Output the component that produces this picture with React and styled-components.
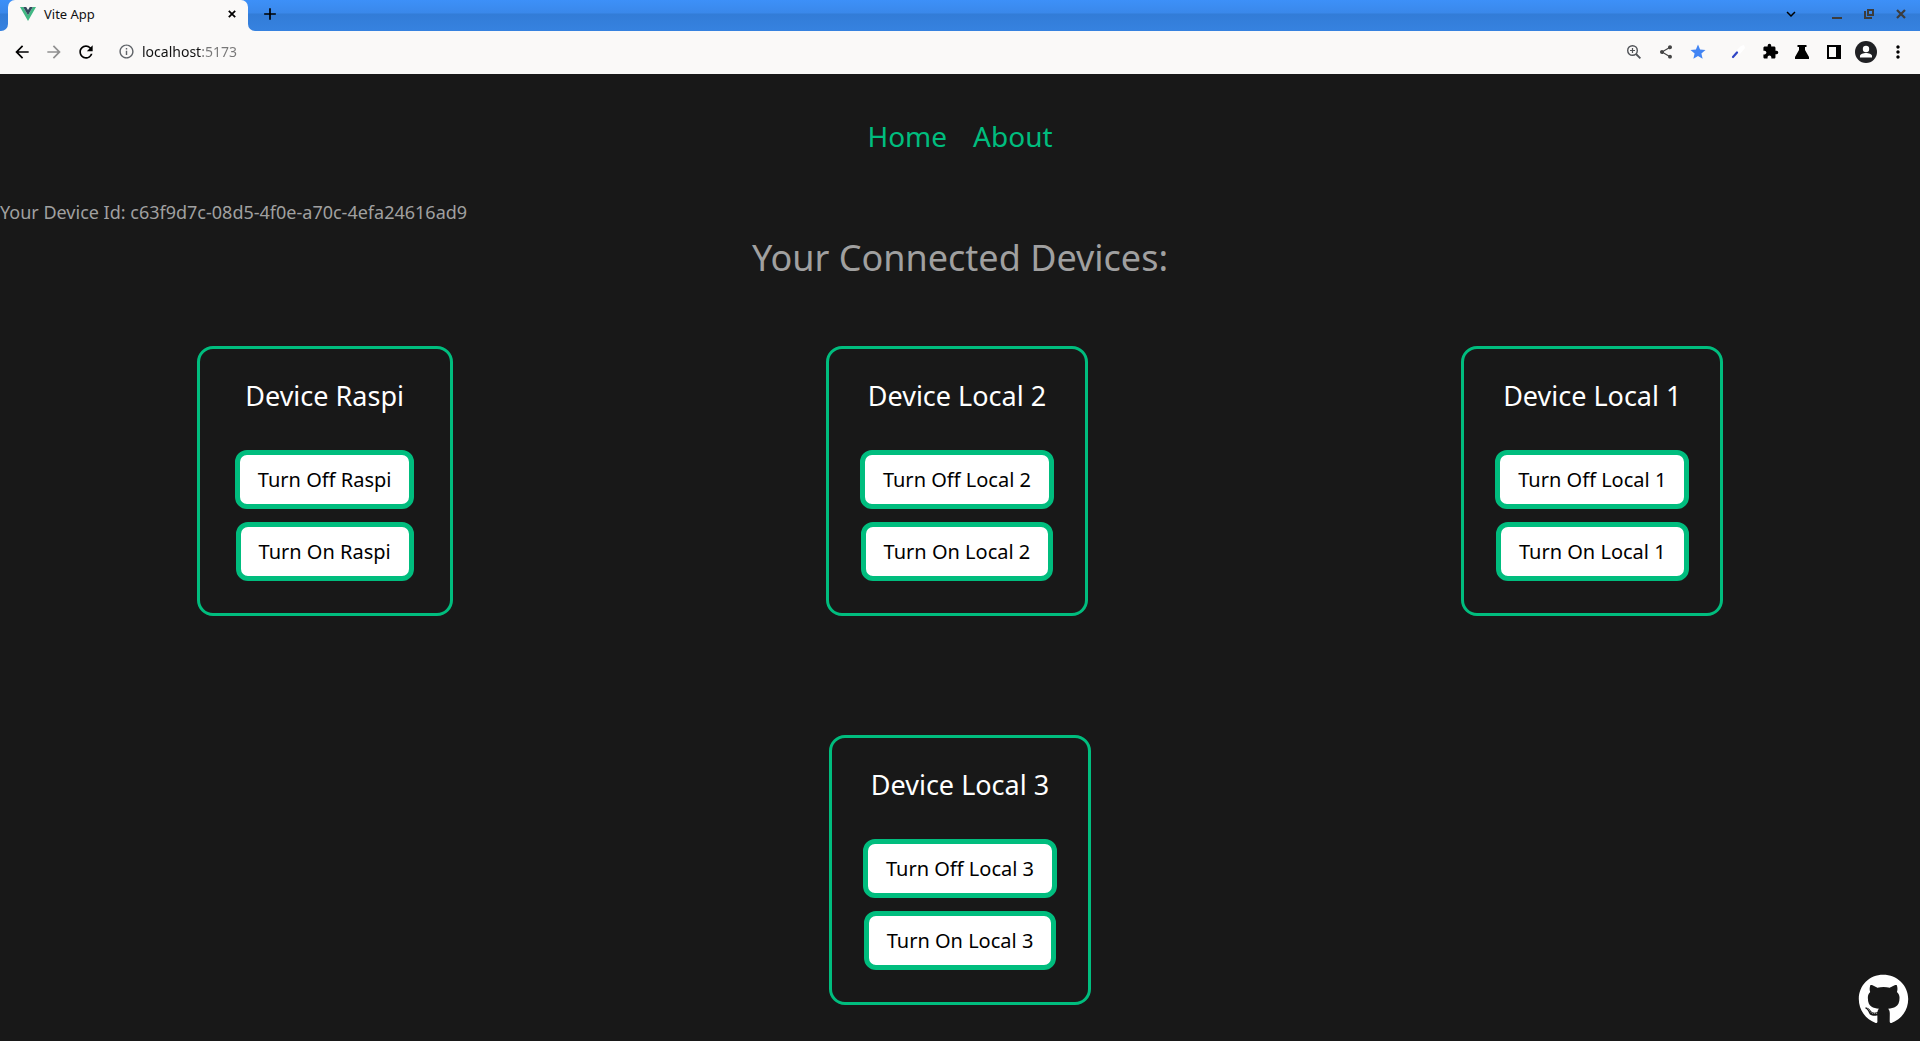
import React from "react";
import styled, { createGlobalStyle } from "styled-components";
import { MdArrowBack, MdArrowForward, MdRefresh, MdInfoOutline, MdShare, MdStar, MdExtension, MdMoreVert, MdAdd, MdKeyboardArrowDown } from "react-icons/md";
import { FaGithub } from "react-icons/fa";

const Global = createGlobalStyle`
  *, *::before, *::after { box-sizing: border-box; }
  body { margin: 0; background: #181818; font-family: "Noto Sans", sans-serif; }
  button { font-family: inherit; }
`;

const Screen = styled.div`
  min-height: 100vh;
  display: flex;
  flex-direction: column;
`;

const chrome = "linear-gradient(180deg, #3d90f8 0, #3a88ea 13px, #327cd7 14px, #3682e0 31px)";

const TabStrip = styled.div`
  display: flex;
  height: 31px;
  background: #faf9f8;
`;
const StripEdge = styled.div`
  width: 8px;
  background: ${chrome};
  border-bottom-right-radius: 7px;
`;
const TabSlot = styled.div`
  width: 240px;
  background: ${chrome};
`;
const Tab = styled.div`
  height: 31px;
  display: flex;
  align-items: center;
  gap: 8px;
  padding: 0 8px 3px 12px;
  border-radius: 7px 7px 0 0;
  background: #faf9f8;
  font-size: 13px;
  color: #111;
`;
const TabTitle = styled.span`
  flex: 1;
`;
const StripRest = styled.div`
  flex: 1;
  display: flex;
  align-items: center;
  padding: 0 5px 3px 12px;
  background: ${chrome};
  border-bottom-left-radius: 7px;
`;
const IconButton = styled.button`
  width: ${(p) => p.$w || 32}px;
  height: ${(p) => p.$h || 32}px;
  flex: none;
  display: flex;
  align-items: center;
  justify-content: center;
  padding: 0;
  border: 0;
  background: none;
  color: ${(p) => p.$color || "#000"};
`;
const Fill = styled.div`
  flex: 1;
`;

const Toolbar = styled.div`
  display: flex;
  align-items: center;
  height: 43px;
  padding: 0 6px 2px;
  background: #faf9f8;
`;
const Address = styled.input`
  flex: 1;
  min-width: 0;
  padding: 0;
  border: 0;
  outline: 0;
  font-family: "Noto Sans", sans-serif;
  font-size: 14px;
  line-height: 20px;
  color: transparent;
  background: linear-gradient(90deg, #111 60px, #777 60px);
  background-clip: text;
`;
const Spacer = styled.div`
  width: 8px;
`;

const Page = styled.main`
  flex: 1;
  display: flex;
  flex-direction: column;
  color: #a0a0a0;
`;
const Nav = styled.nav`
  display: flex;
  justify-content: center;
  gap: 26px;
  padding: 39px 0 37px;
`;
const NavLink = styled.a`
  font-size: 28px;
  line-height: 46px;
  color: #00bd7e;
  text-decoration: none;
`;
const DeviceId = styled.p`
  margin: 0;
  font-size: 18px;
  line-height: 32px;
`;
const Heading = styled.h1`
  margin: 0;
  text-align: center;
  font-size: 36px;
  font-weight: 400;
  line-height: 60px;
`;
const Devices = styled.section`
  display: flex;
  flex-direction: column;
  gap: 119px;
  padding: 58px 10px 35px;
`;
const Row = styled.div`
  display: flex;
  justify-content: space-around;
`;
const Card = styled.article`
  min-width: 256px;
  display: flex;
  flex-direction: column;
  align-items: center;
  gap: 13px;
  padding: 29px 31px 32px;
  border: 3px solid #00bd7e;
  border-radius: 16px;
`;
const CardTitle = styled.h2`
  margin: 0 0 23px;
  font-size: 27px;
  font-weight: 400;
  line-height: 36px;
  color: #fff;
`;
const Action = styled.button`
  height: 59px;
  padding: 0 18px;
  border: 5px solid #00bd7e;
  border-radius: 12px;
  background: #fff;
  color: #000;
  font-size: 20px;
  line-height: 27px;
`;
const Repo = styled.a`
  position: fixed;
  right: 11px;
  bottom: 16px;
  display: flex;
  color: #fff;
`;

function Device({ name }) {
  return (
    <Card>
      <CardTitle>Device {name}</CardTitle>
      <Action>Turn Off {name}</Action>
      <Action>Turn On {name}</Action>
    </Card>
  );
}

const VueLogo = () => (
  <svg width="16" height="14" viewBox="0 0 16 14" aria-hidden="true">
    <path d="M0 0h3.2L8 8.3 12.8 0H16L8 14z" fill="#41b883" />
    <path d="M3.2 0h3L8 3.1 9.8 0h3L8 8.3z" fill="#34495e" />
  </svg>
);
const Brush = () => (
  <svg width="16" height="16" viewBox="0 0 16 16" aria-hidden="true">
    <path d="M7 6l4-4 3-1 1 3-5 6z" fill="#fff" />
    <path d="M3 13l4-4.5" stroke="#2f45c5" strokeWidth="2.2" strokeLinecap="round" />
  </svg>
);
const ZoomGlass = () => (
  <svg width="14" height="14" viewBox="0 0 14 14" fill="none" stroke="#505357" aria-hidden="true">
    <circle cx="5.5" cy="5.5" r="4.8" strokeWidth="1.4" />
    <path d="M9 9l4.4 4.4" strokeWidth="1.8" />
    <path d="M5.5 3v5M3 5.5h5" strokeWidth="1.2" />
  </svg>
);
const Flask = () => (
  <svg width="14" height="14" viewBox="0 0 14 14" aria-hidden="true">
    <path d="M2.5 0h9v2H10v3l4 7v2H0v-2l4-7V2H2.5z" />
  </svg>
);
const SidePanel = () => (
  <svg width="14" height="14" viewBox="0 0 14 14" aria-hidden="true">
    <path fillRule="evenodd" d="M0 0h14v14H0zM2 2v10h7V2z" />
  </svg>
);
const Avatar = () => (
  <svg width="22" height="22" viewBox="0 0 22 22" aria-hidden="true">
    <circle cx="11" cy="11" r="11" fill="#202124" />
    <circle cx="11" cy="8" r="3.2" fill="#fff" />
    <path d="M5 16.5V15c0-2 3.5-3 6-3s6 1 6 3v1.5z" fill="#fff" />
  </svg>
);
const Minimize = () => (
  <svg width="10" height="10" viewBox="0 0 10 10" aria-hidden="true">
    <path d="M0 8h10v2H0z" fill="#3c3c3c" />
  </svg>
);
const Restore = () => (
  <svg width="10" height="10" viewBox="0 0 10 10" aria-hidden="true">
    <path d="M4 1h5v5H4zM1 2v7h7" fill="none" stroke="#3c3c3c" strokeWidth="2" />
  </svg>
);
const Cross = ({ size = 10, color = "#3c3c3c" }) => (
  <svg width={size} height={size} viewBox="0 0 10 10" aria-hidden="true">
    <path d="M1 1l8 8M9 1L1 9" stroke={color} strokeWidth="2.2" />
  </svg>
);

export default function App() {
  return (
    <Screen>
      <Global />
      <TabStrip>
        <StripEdge />
        <TabSlot>
          <Tab>
            <VueLogo />
            <TabTitle>Vite App</TabTitle>
            <IconButton $w={16} $h={16} aria-label="Close tab"><Cross size={8} color="#000" /></IconButton>
          </Tab>
        </TabSlot>
        <StripRest>
          <IconButton $w={20} $h={20} aria-label="New tab"><MdAdd size={20} /></IconButton>
          <Fill />
          <IconButton $w={32} $h={20} aria-label="Search tabs"><MdKeyboardArrowDown size={18} /></IconButton>
          <Spacer /><Spacer />
          <IconButton $w={28} $h={20} aria-label="Minimize"><Minimize /></IconButton>
          <IconButton $w={36} $h={20} aria-label="Restore"><Restore /></IconButton>
          <IconButton $w={28} $h={20} aria-label="Close"><Cross /></IconButton>
        </StripRest>
      </TabStrip>
      <Toolbar>
        <IconButton aria-label="Back"><MdArrowBack size={20} /></IconButton>
        <IconButton $color="#909090" aria-label="Forward"><MdArrowForward size={20} /></IconButton>
        <IconButton aria-label="Reload"><MdRefresh size={20} /></IconButton>
        <Spacer />
        <IconButton $color="#5f6368" aria-label="Site information"><MdInfoOutline size={17} /></IconButton>
        <Address aria-label="Address" defaultValue="localhost:5173" />
        <IconButton aria-label="Zoom"><ZoomGlass /></IconButton>
        <IconButton $color="#444" aria-label="Share"><MdShare size={16} /></IconButton>
        <IconButton $color="#4285f4" aria-label="Bookmark"><MdStar size={18} /></IconButton>
        <Spacer />
        <IconButton aria-label="Color picker"><Brush /></IconButton>
        <IconButton aria-label="Extensions"><MdExtension size={17} /></IconButton>
        <IconButton aria-label="Experiments"><Flask /></IconButton>
        <IconButton aria-label="Side panel"><SidePanel /></IconButton>
        <IconButton aria-label="Profile"><Avatar /></IconButton>
        <IconButton aria-label="Menu"><MdMoreVert size={20} /></IconButton>
      </Toolbar>
      <Page>
        <Nav>
          <NavLink href="#home">Home</NavLink>
          <NavLink href="#about">About</NavLink>
        </Nav>
        <DeviceId>Your Device Id: c63f9d7c-08d5-4f0e-a70c-4efa24616ad9</DeviceId>
        <Heading>Your Connected Devices:</Heading>
        <Devices>
          <Row>
            <Device name="Raspi" />
            <Device name="Local 2" />
            <Device name="Local 1" />
          </Row>
          <Row>
            <Device name="Local 3" />
          </Row>
        </Devices>
      </Page>
      <Repo href="#github" aria-label="GitHub"><FaGithub size={51} /></Repo>
    </Screen>
  );
}
